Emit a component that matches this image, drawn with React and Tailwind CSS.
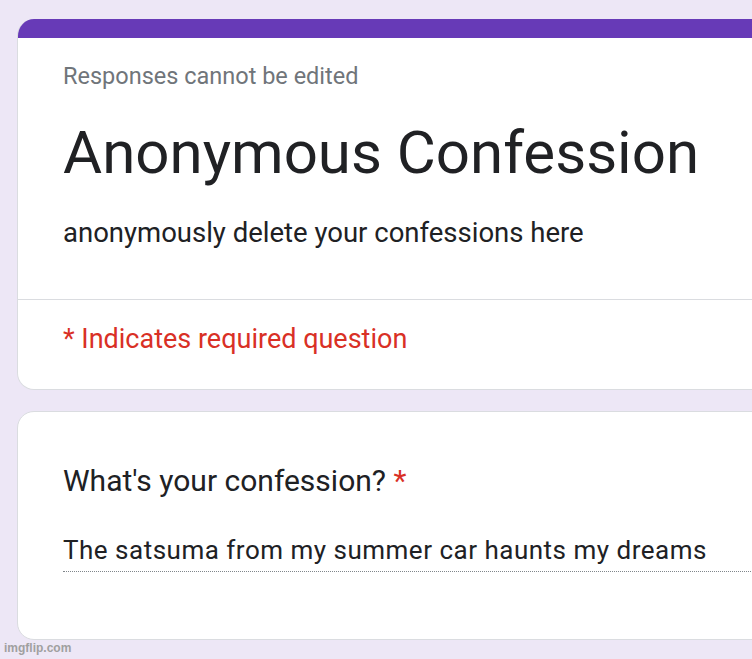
export default function App() {
  return (
    <div className="relative h-[659px] w-[752px] overflow-hidden bg-[#ede7f6] font-['Roboto',sans-serif]">
      <div className="ml-[17px] w-[760px] pt-[19px]">
        <div className="overflow-hidden rounded-l-[17px] border border-t-0 border-[#dadce0] bg-white">
          <div className="h-[19px] bg-[#673ab7]" />
          <div className="px-[45px] pt-[23px]">
            <div className="text-[23.5px] leading-[30px] text-[#70757a]">Responses cannot be edited</div>
            <div className="mt-[25.5px] text-[60px] leading-[72px] text-[#202124]">Anonymous Confession</div>
            <div className="mt-[26px] text-[27.5px] leading-[36px] text-[#202124]">anonymously delete your confessions here</div>
          </div>
          <div className="mt-[48px] border-t border-[#dadce0]" />
          <div className="px-[45px] pb-[32px] pt-[21px] text-[27px] leading-[36px] text-[#d93025]">* Indicates required question</div>
        </div>
        <div className="mt-[21px] rounded-l-[17px] border border-[#dadce0] bg-white px-[45px] pb-[67px] pt-[49px]">
          <div className="text-[30px] leading-[40px] text-[#202124]">
            What's your confession? <span className="text-[#d93025]">*</span>
          </div>
          <div className="mt-[33px] w-[700px] border-b border-dotted border-[#80868b] pb-[5px] text-[26px] leading-[32px] tracking-[0.5px] text-[#202124]">
            The satsuma from my summer car haunts my dreams
          </div>
        </div>
      </div>
      <div className="absolute bottom-[2px] left-[4px] font-['Liberation_Sans',sans-serif] text-[12px] font-bold text-[#a0a0a0]">imgflip.com</div>
    </div>
  );
}
